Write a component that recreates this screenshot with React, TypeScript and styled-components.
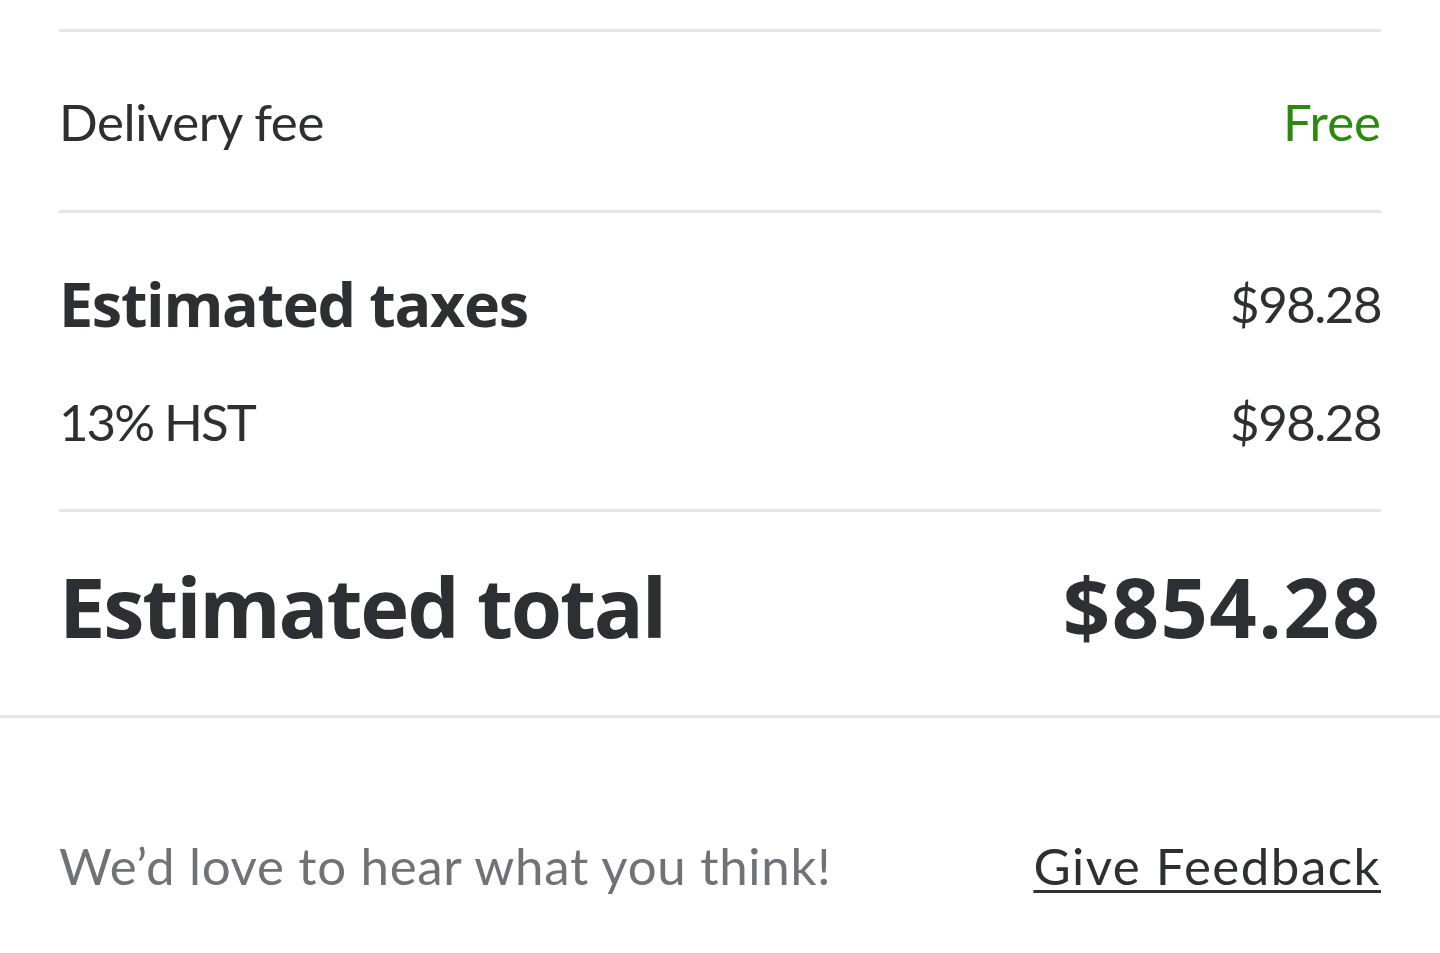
import React from "react";
import styled, { createGlobalStyle } from "styled-components";

const Global = createGlobalStyle`
  html, body { margin: 0; padding: 0; background: #ffffff; }
  body {
    font-family: "Lato", "Noto Sans", sans-serif;
    color: #2e2f32;
    font-variant-ligatures: none;
  }
`;

const Page = styled.div`
  width: 1440px;
  height: 953px;
  overflow: hidden;
  display: flex;
  flex-direction: column;
`;

const Summary = styled.div`
  padding: 29px 59px 0;
  display: flex;
  flex-direction: column;
  flex-shrink: 0;
`;

const Divider = styled.div`
  height: 3px;
  background: #e6e6e8;
  flex-shrink: 0;
`;

const Section = styled.div<{ $pt: number; $pb: number; $gap?: number }>`
  display: flex;
  flex-direction: column;
  padding: ${(p) => p.$pt}px 0 ${(p) => p.$pb}px;
  gap: ${(p) => p.$gap ?? 0}px;
`;

const Row = styled.div<{ $h: number }>`
  height: ${(p) => p.$h}px;
  display: flex;
  align-items: center;
  justify-content: space-between;
`;

type Tone = "regular" | "heading" | "total";

const sizes: Record<Tone, { size: number; weight: number; family: string }> = {
  regular: { size: 51, weight: 400, family: `"Lato", "Noto Sans", sans-serif` },
  heading: { size: 61, weight: 700, family: `"Open Sans", "Noto Sans", sans-serif` },
  total: { size: 83, weight: 700, family: `"Open Sans", "Noto Sans", sans-serif` },
};

const Label = styled.span<{ $tone: Tone; $track?: number }>`
  font-family: ${(p) => sizes[p.$tone].family};
  font-size: ${(p) => sizes[p.$tone].size}px;
  font-weight: ${(p) => sizes[p.$tone].weight};
  letter-spacing: ${(p) => p.$track ?? 0}px;
  line-height: 1;
  color: #2e2f32;
`;

const Amount = styled.span<{ $tone: Tone; $green?: boolean; $track?: number }>`
  font-family: ${(p) => sizes[p.$tone].family};
  font-size: ${(p) => sizes[p.$tone].size}px;
  font-weight: ${(p) => sizes[p.$tone].weight};
  letter-spacing: ${(p) => p.$track ?? 0}px;
  line-height: 1;
  color: ${(p) => (p.$green ? "#2b8a0c" : "#2e2f32")};
`;

const Feedback = styled.div`
  padding: 0 59px;
  height: 294px;
  flex-shrink: 0;
  display: flex;
  align-items: center;
  justify-content: space-between;
`;

const Prompt = styled.span`
  font-size: 51px;
  line-height: 1;
  letter-spacing: 0.7px;
  color: #717178;
`;

const FeedbackLink = styled.a`
  font-size: 51px;
  line-height: 1;
  letter-spacing: 1.5px;
  color: #2e2f32;
  text-decoration: underline;
  text-decoration-thickness: 3px;
  text-underline-offset: 5px;
  cursor: pointer;
`;

export default function App() {
  return (
    <Page>
      <Global />
      <Summary>
        <Divider />
        <Section $pt={0} $pb={0}>
          <Row $h={178}>
            <Label $tone="regular" $track={-0.4}>
              Delivery fee
            </Label>
            <Amount $tone="regular" $green>
              Free
            </Amount>
          </Row>
        </Section>
        <Divider />
        <Section $pt={40} $pb={38} $gap={18}>
          <Row $h={100}>
            <Label $tone="heading" $track={-1.3}>
              Estimated taxes
            </Label>
            <Amount $tone="regular" $track={-1.5}>
              $98.28
            </Amount>
          </Row>
          <Row $h={100}>
            <Label $tone="regular" $track={-2}>
              13% HST
            </Label>
            <Amount $tone="regular" $track={-1.5}>
              $98.28
            </Amount>
          </Row>
        </Section>
        <Divider />
        <Section $pt={0} $pb={16}>
          <Row $h={187}>
            <Label $tone="total" $track={-2.2}>
              Estimated total
            </Label>
            <Amount $tone="total" $track={1.4}>
              $854.28
            </Amount>
          </Row>
        </Section>
      </Summary>
      <Divider />
      <Feedback>
        <Prompt>We’d love to hear what you think!</Prompt>
        <FeedbackLink>Give Feedback</FeedbackLink>
      </Feedback>
    </Page>
  );
}
